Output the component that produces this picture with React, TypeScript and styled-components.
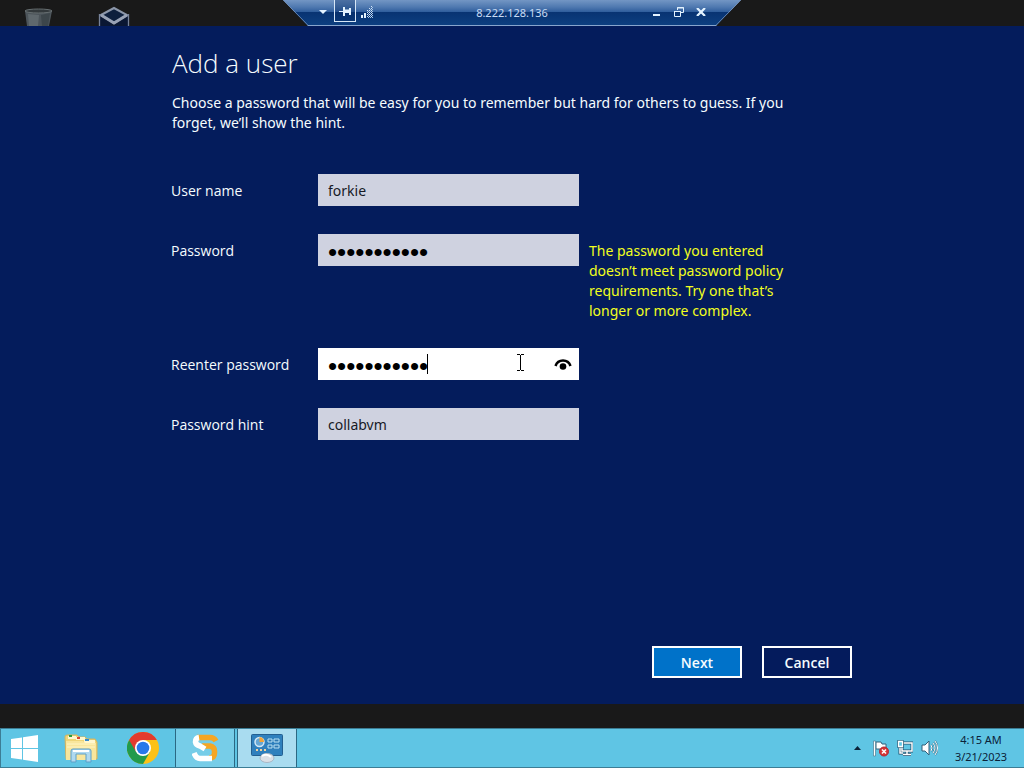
import React from "react";
import styled, { createGlobalStyle } from "styled-components";

const GlobalStyle = createGlobalStyle`
  *, *::before, *::after { box-sizing: border-box; }
  body {
    margin: 0;
    background: #191919;
    font-family: "Open Sans", "Noto Sans", sans-serif;
    font-size: 14px;
    line-height: 20px;
    color: #f6fcff;
  }
  button, input { font: inherit; color: inherit; }
  h1, p { margin: 0; font-weight: 400; }
  svg { display: block; }
`;

const wideText = `"Noto Sans", "Open Sans", sans-serif`;

const Screen = styled.div`
  min-height: 100vh;
  display: flex;
  flex-direction: column;
`;

const DesktopTop = styled.header`
  height: 26px;
  display: grid;
  grid-template-columns: 1fr 458px 1fr;
  background: #191919;
`;

const DesktopIcons = styled.div`
  display: flex;
  align-items: flex-end;
  gap: 44px;
  padding-left: 23px;
`;

const ConnectionBar = styled.div`
  display: flex;
  align-items: flex-start;
  justify-content: space-between;
  padding: 0 29px;
  background: linear-gradient(#7396c4 0, #4f79b0 7px, #2f5d9c 12px, #083372 12px, #0d3f80 25px, #88a5cd 25px);
  clip-path: polygon(0 0, 100% 0, calc(100% - 25px) 100%, 25px 100%);
  position: relative;
`;

const BarEdges = styled.svg`
  position: absolute;
  inset: 0;
  pointer-events: none;
`;

const BarGroup = styled.div<{ $end?: boolean }>`
  flex: 1;
  display: flex;
  align-items: flex-start;
  justify-content: ${(p) => (p.$end ? "flex-end" : "flex-start")};
`;

const BarAddress = styled.span`
  font-size: 11px;
  line-height: 26px;
  color: #c9dcf4;
  font-family: ${wideText};
`;

const BarButton = styled.button<{ $framed?: boolean }>`
  width: 22px;
  height: 22px;
  padding: 2px 0 0;
  display: grid;
  place-items: center;
  color: #e4f3ff;
  background: ${(p) => (p.$framed ? "rgba(5, 42, 100, 0.35)" : "none")};
  border: 0 solid #d7e7f7;
  border-width: ${(p) => (p.$framed ? "0 1px 1px" : "0")};
`;

const Pane = styled.main`
  flex: 1;
  display: flex;
  flex-direction: column;
  background: #041c5c;
  padding: 21px 24px 26px;
`;

const UserForm = styled.form`
  flex: 1;
  width: 100%;
  max-width: 682px;
  margin: 0 auto;
  display: flex;
  flex-direction: column;
`;

const Heading = styled.div`
  padding-left: 1px;
`;

const Title = styled.h1`
  font-size: 26px;
  line-height: 32px;
  font-weight: 350;
`;

const Intro = styled.p`
  max-width: 640px;
  padding-top: 14px;
  font-family: ${wideText};
`;

const Fields = styled.div`
  display: flex;
  flex-direction: column;
  gap: 28px;
  padding-top: 41px;
`;

const FieldRow = styled.div`
  display: grid;
  grid-template-columns: 147px 261px minmax(0, 216px);
  align-items: start;
`;

const FieldLabel = styled.label`
  padding-top: 7px;
`;

const FieldBox = styled.div<{ $active?: boolean }>`
  position: relative;
  display: flex;
  height: 32px;
  color: ${(p) => (p.$active ? "#000" : "#171a26")};
  background: ${(p) => (p.$active ? "#fff" : "#cfd2e0")};
`;

const TextInput = styled.input`
  flex: 1;
  min-width: 0;
  padding: 2px 10px 0;
  border: 0;
  outline: 0;
  background: none;
  font-family: ${wideText};

  &[type="password"] {
    padding-top: 4px;
    color: #000;
    font-family: "Liberation Sans", sans-serif;
    font-size: 26px;
  }
`;

const Caret = styled.span`
  position: absolute;
  left: 109px;
  top: 6px;
  width: 1px;
  height: 20px;
  background: #000;
`;

const Pointer = styled.svg`
  position: absolute;
  left: 199px;
  top: 6px;
`;

const RevealButton = styled.button`
  width: 32px;
  padding: 2px 0 0;
  border: 0;
  background: none;
  display: grid;
  place-items: center;
`;

const ErrorText = styled.p`
  padding: 7px 8px 0 10px;
  margin-bottom: -1px;
  color: #f2ff1e;
  font-family: ${wideText};
`;

const Actions = styled.div`
  display: flex;
  justify-content: flex-end;
  gap: 20px;
  margin-top: auto;
  padding-right: 1px;
`;

const ActionButton = styled.button<{ $primary?: boolean }>`
  width: 90px;
  height: 32px;
  padding: 2px 0 0;
  border: 2px solid #fff;
  background: ${(p) => (p.$primary ? "#0072c9" : "#041b5c")};
  font-weight: 600;
`;

const DesktopBottom = styled.div`
  height: 24px;
`;

const Taskbar = styled.footer`
  height: 40px;
  display: flex;
  background: #5fc5e4;
  border: solid #3c7d95;
  border-width: 1px 0 1px 1px;
  color: #0b2238;
`;

const StartButton = styled.button`
  width: 50px;
  padding: 0 6px 0 8px;
  border: 0;
  background: none;
  display: flex;
  align-items: center;
`;

const TaskButton = styled.button<{ $state?: "open" | "active" }>`
  width: 60px;
  margin-right: 2px;
  padding: 0;
  display: grid;
  place-items: center;
  border: 0 solid #2b6883;
  border-width: ${(p) => (p.$state ? "0 1px" : "0")};
  background: ${(p) => (p.$state === "active" ? "#a9dcf0" : p.$state === "open" ? "#76cde8" : "none")};
`;

const Tray = styled.div`
  margin-left: auto;
  display: flex;
  align-items: center;
  gap: 8px;
  padding-right: 11px;
`;

const TrayButton = styled.button`
  padding: 0;
  border: 0;
  background: none;
`;

const Clock = styled.time`
  width: 64px;
  margin-left: 3px;
  text-align: center;
  font-size: 11px;
  line-height: 17px;
  white-space: nowrap;
  font-family: ${wideText};
`;

const BinIcon = () => (
  <svg width="31" height="18" viewBox="0 0 31 18" aria-hidden="true">
    <path d="M2 3 L29 3 L26 18 L4 18 Z" fill="#4c545a" />
    <path d="M5 6 L16 7 L15 18 L6 18 Z" fill="#5f686d" />
    <path d="M18 7 L27 5 L25 18 L19 18 Z" fill="#3d464b" />
    <ellipse cx="15.500" cy="3" rx="13.500" ry="2" fill="#33393c" stroke="#666e70" />
  </svg>
);

const BoxIcon = () => (
  <svg width="32" height="20" viewBox="0 0 32 20" aria-hidden="true">
    <path d="M1 8 L16 19 L31 8 V20 H1Z" fill="#0a1733" />
    <path d="M3 9 L16 2 L29 9 L16 17 Z" fill="#0d1f3d" stroke="#8b96a9" strokeWidth="2" />
    <path d="M3 9 L16 17 L29 9" fill="none" stroke="#98a2b5" strokeWidth="3" />
    <path d="M1.500 8 V20 M30.500 8 V20" stroke="#77839a" strokeWidth="1.300" />
  </svg>
);

const PinIcon = () => (
  <svg width="13" height="9" viewBox="0 0 13 9" fill="currentColor" aria-hidden="true">
    <path d="M0 4h5v1H0zM4 0h2v9H4zM6 3h4v3H6zM10 1h2v7h-2z" />
    <path d="M6 2h4v1H6z" opacity="0.500" />
  </svg>
);

const SignalIcon = () => (
  <svg width="12" height="12" viewBox="0 0 12 12" aria-hidden="true">
    <path d="M0 9h2v3H0zM3 7h2v5H3z" fill="#e4f3ff" />
    <path d="M6.500 4v8M8.500 2v10M10.500 0v12" stroke="#d5e6f8" strokeDasharray="1 1" />
    <path d="M7.500 5v7M9.500 3v9M11.500 1v11" stroke="#a9c5e4" strokeDasharray="1 1" />
  </svg>
);

const EyeIcon = () => (
  <svg width="18" height="14" viewBox="0 0 18 14" aria-hidden="true">
    <path d="M1.500 8 C4 0.800 14 0.800 16.500 8" fill="none" stroke="#000" strokeWidth="2.500" />
    <circle cx="9" cy="8.500" r="3.300" fill="#000" />
  </svg>
);

const WindowsLogo = () => (
  <svg width="29" height="27" viewBox="0 0 29 27" fill="#fff" aria-hidden="true">
    <path d="M2 4 L13 2.500 V13 H2ZM14 2.200 L29 0 V13 H14ZM2 14 H13 V24.500 L2 23ZM14 14 H29 V27 L14 24.800Z" />
  </svg>
);

const ExplorerIcon = () => (
  <svg width="34" height="32" viewBox="0 0 34 32" aria-hidden="true">
    <path d="M1 5 Q1 3 3 3 H13 L15 5 H21 L23 7 H31 L33 10 V27 H2Z" fill="#efd577" stroke="#d5b45e" />
    <path d="M4 4h8v3H4z" fill="#fff7cf" /><path d="M5 3h3v2H5z" fill="#2b9a3b" />
    <path d="M12 5h9v3h-9z" fill="#fff7cf" /><path d="M13 5h3v2h-3z" fill="#d74331" />
    <path d="M20 8h11v3H20z" fill="#fff7cf" /><path d="M21 7h4v2h-4z" fill="#3589cd" />
    <path d="M2 9h17l2 2h11v17H2Z" fill="#f8e69d" />
    <path d="M3 12h28M3 15h28" stroke="#fff5c5" />
    <path d="M7 30V19q0-2 2-2h16q2 0 2 2v11h-5v-8H12v8Z" fill="#afd9ef" stroke="#5c9fc8" />
    <path d="M9 19h16" stroke="#fff" strokeWidth="2" />
  </svg>
);

const ChromeIcon = () => (
  <svg width="32" height="32" viewBox="0 0 32 32" aria-hidden="true">
    <circle cx="16" cy="16" r="16" fill="#fbc116" />
    <path d="M16 16 L2.140 8 A16 16 0 0 0 16 32 L22.900 20Z" fill="#229a4b" />
    <path d="M16 8 H29.860 A16 16 0 0 0 2.140 8 L9.100 20 L16 16Z" fill="#e33b2e" />
    <circle cx="16" cy="16" r="8" fill="#fff" />
    <circle cx="16" cy="16" r="6.300" fill="#2878ea" />
  </svg>
);

const SwirlIcon = () => (
  <svg width="27" height="28" viewBox="0 0 27 28" fill="none" strokeWidth="5.500" aria-hidden="true">
    <path d="M5 3.500 H18 Q22 3.500 24 7" stroke="#f5a623" />
    <path d="M10 12 L18 12 Q22.500 13 22.500 17 V19 Q22.500 24 17 24" stroke="#f5a623" />
    <path d="M7 3.500 Q3.500 4 3.500 8 Q4 11 8 12 L13 15" stroke="#fff" />
    <path d="M2 19 Q4 24.500 8 24.500 H20" stroke="#fff" />
  </svg>
);

const ControlPanelIcon = () => (
  <svg width="32" height="30" viewBox="0 0 32 30" aria-hidden="true">
    <rect x="0.500" y="1.500" width="31" height="21" rx="1" fill="#2f80bd" stroke="#235f91" />
    <circle cx="8.500" cy="9" r="4.500" fill="#66a7d5" stroke="#d3e8f6" strokeWidth="1.500" />
    <path d="M8.500 9V4A5 5 0 0 1 13 9Z" fill="#f0a43a" />
    <path d="M17 6h4v3h-4zM23 6h5v3h-5zM17 12h4v3h-4zM23 12h5v3h-5z" fill="#2e79b2" stroke="#b9e2f5" />
    <path d="M5 17h2M9 17h2M13 17h2" stroke="#f3d39c" strokeWidth="2" />
    <ellipse cx="16" cy="25" rx="7" ry="4.500" fill="#dbe0e6" stroke="#a9b6c4" />
    <path d="M11 23 Q16 20 20 24" fill="none" stroke="#fff" strokeWidth="2" />
  </svg>
);

const FlagIcon = () => (
  <svg width="16" height="17" viewBox="0 0 16 17" aria-hidden="true">
    <path d="M3 2 H8 L9 4 H13 V10 H8 L7 9 H3Z" fill="#fff" stroke="#33627c" />
    <path d="M.500 1V16H2.500V1Z" fill="#fff" stroke="#4d7d94" strokeWidth=".700" />
    <circle cx="11" cy="11.500" r="4.500" fill="#d73535" stroke="#b32630" />
    <path d="M9 9.500l4 4M13 9.500l-4 4" stroke="#fff" strokeWidth="1.500" />
  </svg>
);

const NetworkIcon = () => (
  <svg width="16" height="16" viewBox="0 0 16 16" aria-hidden="true">
    <path d="M5 3h10v8H5zM10 11v3M6 14.500h8M3 7v6h3" fill="none" stroke="#24516d" strokeWidth="3" />
    <path d="M5 3h10v8H5zM10 11v3M6 14.500h8M3 7v6h3" fill="none" stroke="#fff" strokeWidth="1.500" />
    <path d="M1.500 1.500h4v5h-4z" fill="#5fc5e4" stroke="#24516d" strokeWidth="2.600" />
    <path d="M1.500 1.500h4v5h-4z" fill="#5fc5e4" stroke="#fff" strokeWidth="1.300" />
  </svg>
);

const SpeakerIcon = () => (
  <svg width="17" height="16" viewBox="0 0 17 16" fill="none" aria-hidden="true">
    <path d="M1 5h3l4-4v14l-4-4H1z" fill="#fff" stroke="#315f79" />
    <path d="M10 5q2 3 0 6M12 3q4 5 0 10M14 1q5 7 0 14" stroke="#386d86" strokeWidth="1.800" />
    <path d="M10 5q2 3 0 6M12 3q4 5 0 10M14 1q5 7 0 14" stroke="#fff" />
  </svg>
);

type FieldProps = {
  id: string;
  label: string;
  value: string;
  secret?: boolean;
  active?: boolean;
  error?: string;
};

const Field = ({ id, label, value, secret, active, error }: FieldProps) => (
  <FieldRow>
    <FieldLabel htmlFor={id}>{label}</FieldLabel>
    <FieldBox $active={active}>
      <TextInput id={id} type={secret ? "password" : "text"} defaultValue={value} autoComplete="off" />
      {active && (
        <>
          <RevealButton type="button" aria-label="Show password"><EyeIcon /></RevealButton>
          <Caret />
          <Pointer width="8" height="17" viewBox="0 0 8 17" aria-hidden="true">
            <path d="M0 .500h3M4 .500h3M3.500 1v15M0 16.500h3M4 16.500h3" stroke="#000" />
          </Pointer>
        </>
      )}
    </FieldBox>
    {error && <ErrorText>{error}</ErrorText>}
  </FieldRow>
);

export default function App() {
  return (
    <Screen>
      <GlobalStyle />
      <DesktopTop>
        <DesktopIcons><BinIcon /><BoxIcon /></DesktopIcons>
        <ConnectionBar>
          <BarGroup>
            <BarButton aria-label="Menu" type="button">
              <svg width="8" height="4" viewBox="0 0 8 4"><path d="M0 0h8L4 4z" fill="currentColor" /></svg>
            </BarButton>
            <BarButton $framed aria-label="Pin" type="button"><PinIcon /></BarButton>
            <BarButton aria-label="Connection quality" type="button"><SignalIcon /></BarButton>
          </BarGroup>
          <BarAddress>8.222.128.136</BarAddress>
          <BarGroup $end>
            <BarButton aria-label="Minimize" type="button">
              <svg width="8" height="10" viewBox="0 0 8 10"><path d="M0 7h7v2H0z" fill="currentColor" /></svg>
            </BarButton>
            <BarButton aria-label="Restore" type="button">
              <svg width="10" height="10" viewBox="0 0 10 10" fill="none" stroke="currentColor">
                <path d="M3.500 3V.500h6v5H7M.500 4.500h6v5h-6zM0 4.500h7M3 1h7" />
              </svg>
            </BarButton>
            <BarButton aria-label="Close" type="button">
              <svg width="10" height="8" viewBox="0 0 10 8"><path d="M1 0l8 8M9 0L1 8" stroke="currentColor" strokeWidth="2.200" /></svg>
            </BarButton>
          </BarGroup>
          <BarEdges width="458" height="26" viewBox="0 0 458 26" fill="none" stroke="#88a5cd">
            <path d="M0 0L25 25.500H433L458 0" />
          </BarEdges>
        </ConnectionBar>
      </DesktopTop>
      <Pane>
        <UserForm onSubmit={(e) => e.preventDefault()}>
          <Heading>
            <Title>Add a user</Title>
            <Intro>
              Choose a password that will be easy for you to remember but hard for others to guess. If you forget, we’ll
              show the hint.
            </Intro>
          </Heading>
          <Fields>
            <Field id="user-name" label="User name" value="forkie" />
            <Field
              id="password"
              label="Password"
              value="collabvm123"
              secret
              error="The password you entered doesn’t meet password policy requirements. Try one that’s longer or more complex."
            />
            <Field id="password-again" label="Reenter password" value="collabvm123" secret active />
            <Field id="password-hint" label="Password hint" value="collabvm" />
          </Fields>
          <Actions>
            <ActionButton $primary type="submit">Next</ActionButton>
            <ActionButton type="button">Cancel</ActionButton>
          </Actions>
        </UserForm>
      </Pane>
      <DesktopBottom />
      <Taskbar>
        <StartButton aria-label="Start" type="button"><WindowsLogo /></StartButton>
        <TaskButton aria-label="File Explorer" type="button"><ExplorerIcon /></TaskButton>
        <TaskButton aria-label="Chrome" type="button"><ChromeIcon /></TaskButton>
        <TaskButton $state="open" aria-label="Sandbox" type="button"><SwirlIcon /></TaskButton>
        <TaskButton $state="active" aria-label="Control Panel" type="button"><ControlPanelIcon /></TaskButton>
        <Tray>
          <TrayButton aria-label="Show hidden icons" type="button">
            <svg width="12" height="4" viewBox="0 0 12 4"><path d="M1 4L4.500 0 8 4z" fill="#0b2238" /></svg>
          </TrayButton>
          <TrayButton aria-label="Action Center" type="button"><FlagIcon /></TrayButton>
          <TrayButton aria-label="Network" type="button"><NetworkIcon /></TrayButton>
          <TrayButton aria-label="Volume" type="button"><SpeakerIcon /></TrayButton>
          <Clock>4:15 AM<br />3/21/2023</Clock>
        </Tray>
      </Taskbar>
    </Screen>
  );
}
